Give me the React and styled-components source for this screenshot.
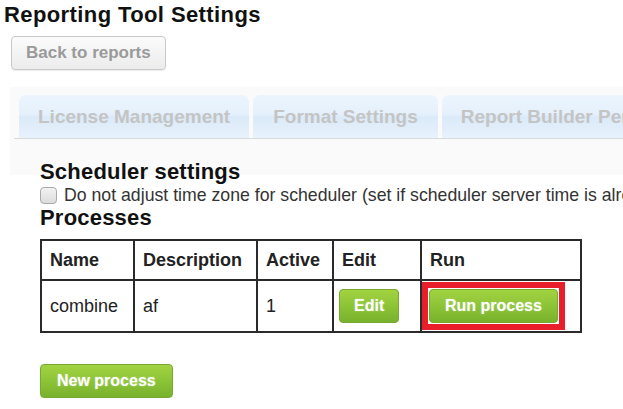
import styled, { createGlobalStyle } from "styled-components";

const GlobalStyle = createGlobalStyle`
  body {
    margin: 0;
    background: #fff;
    font-family: "Liberation Sans", Arial, sans-serif;
    color: #222;
    overflow: hidden;
  }
`;

const Page = styled.div`
  width: 623px;
  height: 409px;
  overflow: hidden;
`;

const Title = styled.h1`
  margin: 0;
  padding: 2px 0 0 4px;
  font-size: 22px;
  line-height: 26px;
  font-weight: bold;
  letter-spacing: 0.4px;
  color: #111;
`;

const GreyButton = styled.button`
  display: block;
  margin: 8px 0 0 11px;
  height: 34px;
  padding: 0 14px;
  font-family: inherit;
  font-size: 17px;
  font-weight: bold;
  color: #9a9a9a;
  background: linear-gradient(#fbfbfb, #ececec);
  border: 1px solid #c9c9c9;
  border-radius: 4px;
  box-shadow: 0 1px 1px rgba(0, 0, 0, 0.08);
`;

const Panel = styled.div`
  margin: 17px 0 0 10px;
  padding-top: 8px;
  background: linear-gradient(#fafafa 0, #fafafa 88px, #fff 88px);
`;

const TabBar = styled.div`
  display: flex;
  gap: 4px;
  margin-left: 4px;
  padding-left: 5px;
  border-bottom: 1px solid #d9d9d9;
  white-space: nowrap;
  overflow: hidden;
`;

const Tab = styled.div`
  flex: 0 0 auto;
  height: 43px;
  padding: 0 ${({ $pad }) => $pad || 19}px;
  display: flex;
  align-items: center;
  font-size: 19px;
  font-weight: bold;
  color: #c4c4c4;
  border-radius: 7px 7px 0 0;
  background: linear-gradient(#ecf5fe 0%, #e4f0fb 45%, #dbeaf8 52%, #e7f2fc 100%);
`;

const Content = styled.div`
  padding: 21px 0 0 30px;
`;

const SectionTitle = styled.h3`
  margin: 0;
  font-size: 22px;
  line-height: 24px;
  font-weight: bold;
  letter-spacing: 0.2px;
  color: #111;
`;

const CheckRow = styled.label`
  display: flex;
  align-items: center;
  gap: 7px;
  height: 22px;
  font-size: 17.7px;
  color: #333;
  white-space: nowrap;
`;

const Check = styled.input`
  appearance: none;
  flex: 0 0 auto;
  margin: 0;
  width: 17px;
  height: 17px;
  border: 1px solid #a9a9a9;
  border-radius: 4px;
  background: linear-gradient(#f2f2f2, #dcdcdc);
`;

const Table = styled.table`
  margin-top: 9px;
  border-collapse: collapse;
  font-size: 18px;
  color: #222;
`;

const Th = styled.th`
  width: ${({ $w }) => $w}px;
  height: 40px;
  padding: 0 0 0 8px;
  text-align: left;
  font-weight: bold;
  border: 2px solid #2a2a2a;
  box-sizing: border-box;
`;

const Td = styled.td`
  height: 50px;
  padding: 0 0 0 ${({ $pad }) => ($pad === undefined ? 8 : $pad)}px;
  border: 2px solid #2a2a2a;
`;

const GreenButton = styled.button`
  height: 34px;
  padding: 0 ${({ $pad }) => $pad || 14}px;
  font-family: inherit;
  font-size: 16px;
  font-weight: bold;
  color: #fff;
  text-shadow: 0 0 2px rgba(255, 255, 255, 0.4);
  background: linear-gradient(#a2d341, #8cc437 50%, #78b22c);
  border: 1px solid #78a832;
  border-radius: 4px;
`;

const Highlight = styled.span`
  display: inline-block;
  padding: 1px;
  border: 6px solid #e81e2a;
  line-height: 0;
`;

const Footer = styled.div`
  padding: 31px 0 0 0;
`;

const App = () => {
  return (
    <Page>
      <GlobalStyle />
      <Title>Reporting Tool Settings</Title>
      <GreyButton>Back to reports</GreyButton>
      <Panel>
        <TabBar>
          <Tab>License Management</Tab>
          <Tab $pad={20}>Format Settings</Tab>
          <Tab $pad={19}>Report Builder Permissions</Tab>
        </TabBar>
        <Content>
          <SectionTitle>Scheduler settings</SectionTitle>
          <CheckRow>
            <Check type="checkbox" />
            Do not adjust time zone for scheduler (set if scheduler server
            time is already in UTC)
          </CheckRow>
          <SectionTitle>Processes</SectionTitle>
          <Table>
            <thead>
              <tr>
                <Th $w={93}>Name</Th>
                <Th $w={123}>Description</Th>
                <Th $w={76}>Active</Th>
                <Th $w={88}>Edit</Th>
                <Th $w={160}>Run</Th>
              </tr>
            </thead>
            <tbody>
              <tr>
                <Td>combine</Td>
                <Td>af</Td>
                <Td>1</Td>
                <Td $pad={5}>
                  <GreenButton>Edit</GreenButton>
                </Td>
                <Td $pad={0}>
                  <Highlight>
                    <GreenButton $pad={15}>Run process</GreenButton>
                  </Highlight>
                </Td>
              </tr>
            </tbody>
          </Table>
          <Footer>
            <GreenButton $pad={16}>New process</GreenButton>
          </Footer>
        </Content>
      </Panel>
    </Page>
  );
};

export default App;
